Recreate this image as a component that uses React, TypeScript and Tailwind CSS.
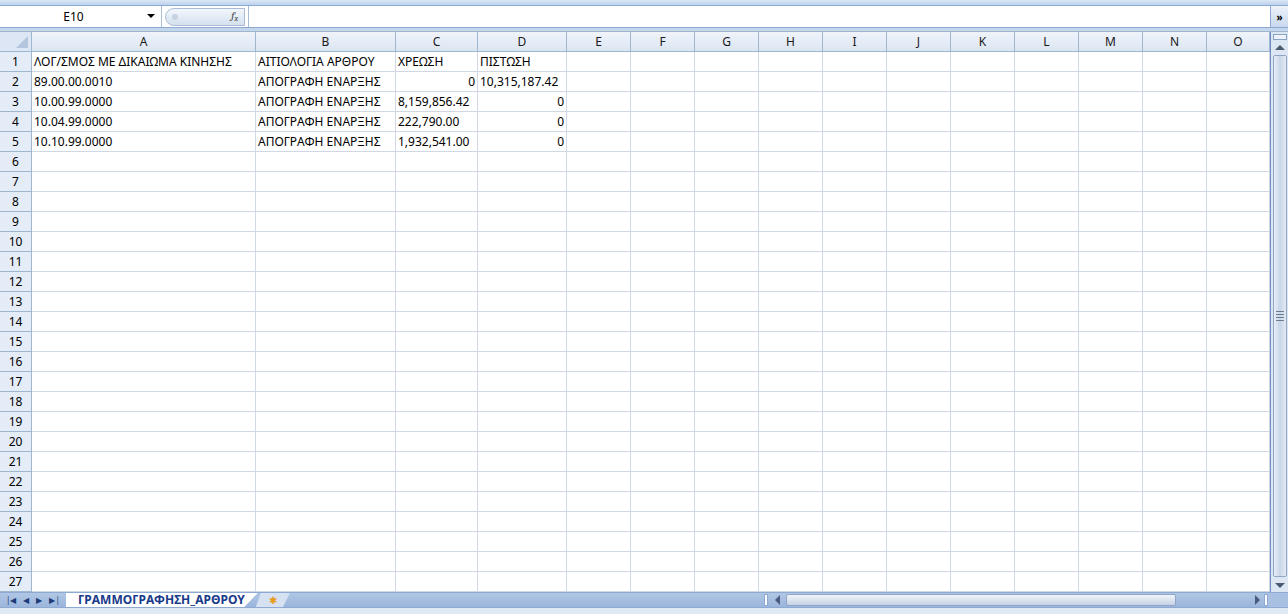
import React from "react";

const cols = ["A","B","C","D","E","F","G","H","I","J","K","L","M","N","O"];
const widths = [224,140,82,89,64,64,64,64,64,64,64,64,64,64,63];
const data: Record<number, (string|[string,"r"])[]> = {
  1: ["ΛΟΓ/ΣΜΟΣ ΜΕ ΔΙΚΑΙΩΜΑ ΚΙΝΗΣΗΣ","ΑΙΤΙΟΛΟΓΙΑ ΑΡΘΡΟΥ","ΧΡΕΩΣΗ","ΠΙΣΤΩΣΗ"],
  2: ["89.00.00.0010","ΑΠΟΓΡΑΦΗ ΕΝΑΡΞΗΣ",["0","r"],"10,315,187.42"],
  3: ["10.00.99.0000","ΑΠΟΓΡΑΦΗ ΕΝΑΡΞΗΣ","8,159,856.42",["0","r"]],
  4: ["10.04.99.0000","ΑΠΟΓΡΑΦΗ ΕΝΑΡΞΗΣ","222,790.00",["0","r"]],
  5: ["10.10.99.0000","ΑΠΟΓΡΑΦΗ ΕΝΑΡΞΗΣ","1,932,541.00",["0","r"]],
};

export default function App() {
  const font = { fontFamily: '"Noto Sans", "Open Sans", sans-serif' };
  return (
    <div className="w-[1288px] h-[614px] overflow-hidden bg-[#c4d6ec] flex flex-col text-[12px] text-black" style={font}>
      <div className="h-[6px] bg-gradient-to-b from-[#dbe7f5] to-[#bcd2ee] border-b border-[#8eaad2]" />
      <div className="h-[22px] flex bg-white border-b border-[#8eaad2]">
        <div className="w-[162px] flex items-center border-r border-[#a7bcd9] relative">
          <span className="flex-1 text-center pr-[14px]">E10</span>
          <span className="absolute right-[6px] top-[8px] w-0 h-0 border-l-[4px] border-r-[4px] border-t-[4px] border-l-transparent border-r-transparent border-t-black" />
        </div>
        <div className="w-[86px] flex items-center pl-[3px]">
          <div className="h-[18px] w-[80px] rounded-l-full rounded-r-[3px] bg-gradient-to-b from-[#f3f7fc] to-[#d4e0ef] border border-[#a9bcd6] flex items-center justify-between px-[6px]">
            <span className="w-[6px] h-[6px] rounded-full bg-[#c7d3e2]" />
            <span className="italic font-serif text-[11px] text-[#444]">f<sub className="text-[8px]">x</sub></span>
          </div>
        </div>
        <div className="flex-1 border-l border-[#a7bcd9]" />
        <div className="w-[18px] bg-gradient-to-b from-[#eef3fa] to-[#c8d8ee] border-l border-[#8eaad2] flex items-center justify-center text-[10px] font-bold leading-none">»</div>
      </div>
      <div className="h-[4px] bg-[#c4d6ec] border-b border-[#9eb6ce]" />
      <div className="flex flex-1 min-h-0">
        <div className="w-[1270px] bg-white overflow-hidden">
          <div className="flex h-[20px] bg-gradient-to-b from-[#f0f4fa] to-[#dbe5f2] border-b border-[#9eb6ce]">
            <div className="w-[32px] border-r border-[#9eb6ce] bg-[#dce6f4] relative">
              <span className="absolute right-[3px] bottom-[3px] w-0 h-0 border-l-[12px] border-t-[12px] border-l-transparent border-t-transparent border-b-0 border-r-0" style={{borderRightWidth:0}} />
              <span className="absolute right-[3px] bottom-[3px] w-0 h-0 border-b-[12px] border-l-[12px] border-l-transparent border-b-[#b4c6de]" />
            </div>
            {cols.map((c,i)=>(
              <div key={c} style={{width:widths[i]}} className="border-r border-[#9eb6ce] text-center leading-[19px] text-[#1a1a1a]">{c}</div>
            ))}
          </div>
          {Array.from({length:27},(_,r)=>r+1).map(r=>(
            <div key={r} className="flex h-[20px]">
              <div className="w-[32px] bg-[#e4ecf7] border-r border-b border-[#9eb6ce] text-center leading-[19px]">{r}</div>
              {cols.map((c,i)=>{
                const v = data[r]?.[i];
                const txt = Array.isArray(v)? v[0] : v;
                const right = Array.isArray(v) || (i>=2 && r>1 && v!==undefined && false);
                return (
                  <div key={c} style={{width:widths[i]}} className={`border-r border-b border-[#d0d7e5] leading-[19px] px-[2px] whitespace-nowrap overflow-visible ${right?"text-right":""}`}>{txt ?? ""}</div>
                );
              })}
            </div>
          ))}
        </div>
        <div className="w-[18px] bg-[#dde7f4] border-l border-[#6e8ec0] flex flex-col items-center">
          <div className="h-[6px] w-[14px] mt-[2px] border border-[#8aa4c8] bg-[#eef3fa]" />
          <div className="h-[14px] flex items-center"><span className="w-0 h-0 border-l-[5px] border-r-[5px] border-b-[5px] border-l-transparent border-r-transparent border-b-[#4a5a70]" /></div>
          <div className="flex-1 w-[14px] my-[1px] rounded-[2px] bg-gradient-to-r from-[#e8eef7] via-[#c9d6e8] to-[#e3eaf4] border border-[#8fa6c6] flex items-center justify-center">
            <div className="flex flex-col gap-[2px]">{[0,1,2,3].map(k=><span key={k} className="block w-[8px] h-[1px] bg-[#6a7a90]" />)}</div>
          </div>
          <div className="h-[14px] flex items-center"><span className="w-0 h-0 border-l-[5px] border-r-[5px] border-t-[5px] border-l-transparent border-r-transparent border-t-[#4a5a70]" /></div>
        </div>
      </div>
      <div className="h-[15px] flex items-stretch bg-gradient-to-b from-[#b0c6e4] to-[#9bb5dc] border-t border-[#8eaad2]">
        <div className="w-[66px] flex items-center gap-[7px] pl-[6px] text-[#1f3a78] text-[8px] leading-none">
          <span>|◀</span><span>◀</span><span>▶</span><span>▶|</span>
        </div>
        <div className="px-[12px] bg-white flex items-center font-bold text-[#1a3a8a] text-[12px] leading-none border-r border-[#8eaad2]" style={{clipPath:"polygon(0 0,100% 0,93% 100%,0 100%)"}}>ΓΡΑΜΜΟΓΡΑΦΗΣΗ_ΑΡΘΡΟΥ</div>
        <div className="w-[34px] -ml-[2px] bg-[#d6e2f2] flex items-center justify-center text-[10px] text-[#e89a1a]" style={{clipPath:"polygon(15% 0,100% 0,80% 100%,0 100%)"}}>✱</div>
        <div className="flex-1" />
        <div className="w-[4px] my-[1px] bg-white border border-[#8eaad2]" />
        <div className="w-[18px] flex items-center justify-center"><span className="w-0 h-0 border-t-[5px] border-b-[5px] border-r-[5px] border-t-transparent border-b-transparent border-r-[#4a5a80]" /></div>
        <div className="w-[390px] my-[1px] rounded-[2px] bg-gradient-to-b from-[#f0f4fa] to-[#c6d3e4] border border-[#8fa6c6]" />
        <div className="w-[74px]" />
        <div className="w-[14px] flex items-center justify-center"><span className="w-0 h-0 border-t-[5px] border-b-[5px] border-l-[5px] border-t-transparent border-b-transparent border-l-[#4a5a80]" /></div>
        <div className="w-[4px] my-[1px] bg-white border border-[#8eaad2]" />
        <div className="w-[20px] bg-[#a9c0e2]" />
      </div>
      <div className="h-[7px] bg-[#dfe9f5] border-t border-[#8eaad2]" />
    </div>
  );
}
